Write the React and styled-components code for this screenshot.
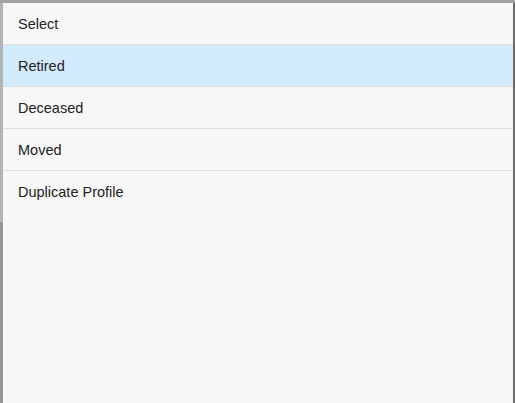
import React from 'react'
import styled, {createGlobalStyle} from 'styled-components'

const Global = createGlobalStyle`
    html, body {
        margin : 0;
        padding : 0;
        height : 100%;
    }
    body {
        font-family : "Liberation Sans", Arial, sans-serif;
        background : linear-gradient(to bottom, #b4b4b4 222px, #969696 222px);
    }
    #root {
        height : 100%;
    }
`
const Page = styled.div`
    display : flex;
    height : 100%;
    padding-left : 3px;
    box-sizing : border-box;
    border-top : 3px solid #a2a2a2;
`
const Panel = styled.div`
    flex : 1;
    display : flex;
    flex-direction : column;
    background : #f7f7f7;
    border-right : 2px solid #6c6c6c;
`
const Option = styled.div`
    height : 41px;
    display : flex;
    align-items : center;
    padding-left : 15px;
    font-size : 14.5px;
    color : #222;
    background : ${p => p.active ? '#d2ebfd' : 'transparent'};
    border-bottom : ${p => p.last ? 'none' : '1px solid #dedede'};
`

const options = ['Select', 'Retired', 'Deceased', 'Moved', 'Duplicate Profile']

function App(){
    return (
        <>
            <Global/>
            <Page>
                <Panel>
                    {options.map((o, i) =>
                        <Option key={o} active={i === 1} last={i === options.length - 1}>{o}</Option>
                    )}
                </Panel>
            </Page>
        </>
    )
}

export default App
